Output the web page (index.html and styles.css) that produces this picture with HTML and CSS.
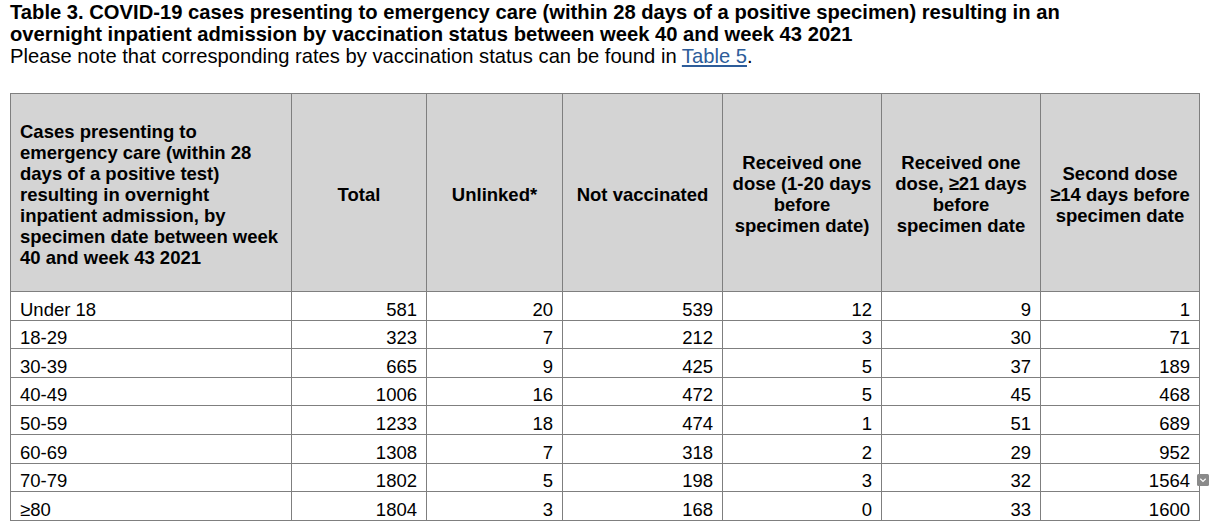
FILE: index.html
```html
<!DOCTYPE html>
<html>
<head>
<meta charset="utf-8">
<link rel="stylesheet" href="styles.css">
</head>
<body>
<div class="page">
  <h1 class="title">Table 3. COVID-19 cases presenting to emergency care (within 28 days of a positive specimen) resulting in an overnight inpatient admission by vaccination status between week 40 and week 43 2021</h1>
  <p class="note">Please note that corresponding rates by vaccination status can be found in <a class="link" href="#">Table 5</a>.</p>
  <table class="data">
    <colgroup>
      <col class="c1"><col class="c2"><col class="c3"><col class="c4"><col class="c5"><col class="c6"><col class="c7">
    </colgroup>
    <thead>
      <tr>
        <th class="first">Cases presenting to emergency care (within 28 days of a positive test) resulting in overnight inpatient admission, by specimen date between week 40 and week 43 2021</th>
        <th>Total</th>
        <th>Unlinked*</th>
        <th>Not vaccinated</th>
        <th>Received one dose (1-20 days before specimen date)</th>
        <th>Received one dose, ≥21 days before specimen date</th>
        <th>Second dose ≥14 days before specimen date</th>
      </tr>
    </thead>
    <tbody>
      <tr><td>Under 18</td><td>581</td><td>20</td><td>539</td><td>12</td><td>9</td><td>1</td></tr>
      <tr><td>18-29</td><td>323</td><td>7</td><td>212</td><td>3</td><td>30</td><td>71</td></tr>
      <tr><td>30-39</td><td>665</td><td>9</td><td>425</td><td>5</td><td>37</td><td>189</td></tr>
      <tr><td>40-49</td><td>1006</td><td>16</td><td>472</td><td>5</td><td>45</td><td>468</td></tr>
      <tr><td>50-59</td><td>1233</td><td>18</td><td>474</td><td>1</td><td>51</td><td>689</td></tr>
      <tr><td>60-69</td><td>1308</td><td>7</td><td>318</td><td>2</td><td>29</td><td>952</td></tr>
      <tr><td>70-79</td><td>1802</td><td>5</td><td>198</td><td>3</td><td>32</td><td class="has-menu">1564<span class="menu-btn"><svg width="12" height="12" viewBox="0 0 12 12"><rect x="0" y="0" width="12" height="12" rx="1.5" fill="#8a8a8a"/><path d="M3.3 4.8 L6 7.4 L8.7 4.8" fill="none" stroke="#ffffff" stroke-width="1.2"/></svg></span></td></tr>
      <tr><td>≥80</td><td>1804</td><td>3</td><td>168</td><td>0</td><td>33</td><td>1600</td></tr>
    </tbody>
  </table>
</div>
</body>
</html>
```

FILE: styles.css
```css
html, body {
  margin: 0;
  padding: 0;
  background: #ffffff;
}
.page {
  padding: 1px 10px 0 10px;
  font-family: "Liberation Sans", Arial, sans-serif;
  color: #000000;
}
.title {
  margin: 0;
  font-size: 20.2px;
  line-height: 22px;
  font-weight: bold;
  width: 1100px;
}
.note {
  margin: 0;
  font-size: 20.2px;
  line-height: 22px;
}
.link {
  color: #2d5c99;
  text-decoration: underline;
}
.data {
  margin-top: 26px;
  border-collapse: collapse;
  table-layout: fixed;
  width: 1190px;
  font-size: 18.5px;
}
.c1 { width: 281px; }
.c2 { width: 135px; }
.c3 { width: 136px; }
.c4 { width: 160px; }
.c5 { width: 159px; }
.c6 { width: 159px; }
.c7 { width: 159px; }
.data th, .data td {
  border: 1px solid #7f7f7f;
}
.data th {
  background: #d4d4d4;
  font-weight: bold;
  font-size: 18.5px;
  line-height: 21px;
  text-align: center;
  vertical-align: middle;
  height: 198px;
  padding: 3px 6px 0 6px;
  box-sizing: border-box;
}
.data th.first {
  text-align: left;
  padding: 3px 9px 0 9px;
}
.data td {
  height: 27.6px;
  padding: 0 9px;
  line-height: 20px;
  text-align: right;
  vertical-align: bottom;
}
.data td:first-child {
  text-align: left;
}
.has-menu {
  position: relative;
}
.menu-btn {
  position: absolute;
  right: -10px;
  top: 10px;
  width: 12px;
  height: 12px;
  display: block;
  line-height: 0;
}
```
